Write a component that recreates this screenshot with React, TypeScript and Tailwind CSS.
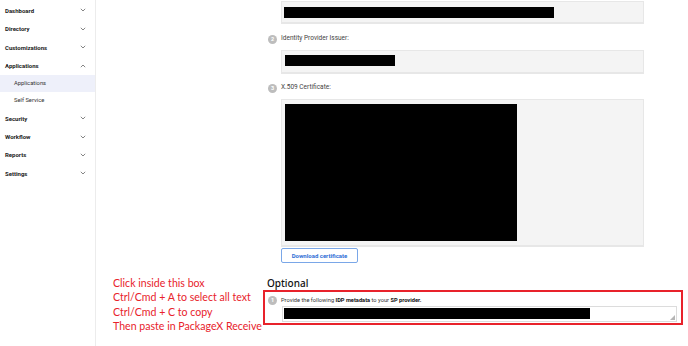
import React from "react";

const Chevron = ({ up }: { up?: boolean }) => (
  <svg width="6" height="4" viewBox="0 0 6 4" className="text-[#777]">
    <path d={up ? "M0.8 3.2 L3 1 L5.2 3.2" : "M0.8 0.8 L3 3 L5.2 0.8"} fill="none" stroke="currentColor" strokeWidth="0.9" />
  </svg>
);

const NavItem = ({ label, up, tall }: { label: string; up?: boolean; tall?: boolean }) => (
  <div className={`${tall ? "h-[18.5px]" : "h-[18.4px]"} flex items-center justify-between pl-[5px] pr-[9px]`}>
    <span className="text-[6px] font-bold text-[#222]">{label}</span>
    <Chevron up={up} />
  </div>
);

const Step = ({ n }: { n: number }) => (
  <span className="w-[9px] h-[9px] rounded-full bg-[#bdbdbd] text-white text-[5.5px] font-bold flex items-center justify-center shrink-0">
    {n}
  </span>
);

export default function App() {
  return (
    <div className="relative w-[688px] h-[346px] bg-white overflow-hidden flex" style={{ fontFamily: "Roboto, 'Noto Sans', sans-serif" }}>
      <aside className="w-[96px] h-full border-r border-[#ececec] pt-[1px] shrink-0">
        <NavItem label="Dashboard" tall />
        <NavItem label="Directory" tall />
        <NavItem label="Customizations" tall />
        <NavItem label="Applications" up tall />
        <div className="h-[17px] bg-[#eef0fa] flex items-center pl-[14px]">
          <span className="text-[5.8px] text-[#333]">Applications</span>
        </div>
        <div className="h-[17px] flex items-center pl-[14px]">
          <span className="text-[5.8px] text-[#333]">Self Service</span>
        </div>
        <NavItem label="Security" />
        <NavItem label="Workflow" />
        <NavItem label="Reports" />
        <NavItem label="Settings" />
      </aside>

      <main className="flex-1 pl-[167px]">
        <div className="w-[420px] flex flex-col">
          <div className="ml-[18px] mt-[1px] w-[363px] h-[23px] bg-[#f4f4f4] border border-[#e7e7e7] border-b-2 pl-[2px] pt-[5px]">
            <div className="w-[270px] h-[11px] bg-black" />
          </div>

          <div className="ml-[5px] mt-[10px] h-[10px] flex items-center gap-[4px]">
            <Step n={2} />
            <span className="text-[6.5px] text-[#444]">Identity Provider Issuer:</span>
          </div>

          <div className="ml-[18px] mt-[6px] w-[363px] h-[24px] bg-[#f4f4f4] border border-[#e7e7e7] border-b-2 pl-[3px] pt-[4px]">
            <div className="w-[110px] h-[11px] bg-black" />
          </div>

          <div className="ml-[5px] mt-[9px] h-[10px] flex items-center gap-[4px]">
            <Step n={3} />
            <span className="text-[6.5px] text-[#444]">X.509 Certificate:</span>
          </div>

          <div className="ml-[18px] mt-[6px] w-[363px] h-[148px] bg-[#f4f4f4] border border-[#e7e7e7] border-b-2 pl-[3px] pt-[4px]">
            <div className="w-[232px] h-[137px] bg-black" />
          </div>

          <div className="ml-[18px] mt-[1px] w-[77px] h-[15px] border border-[#7aa7e8] rounded-[2px] flex items-center justify-center">
            <span className="text-[6px] font-bold text-[#2f6fd6]">Download certificate</span>
          </div>

          <div className="ml-[4px] mt-[14px] h-[12px] flex items-center">
            <span className="text-[10px] font-medium text-[#111]" style={{ fontFamily: "'Noto Sans', sans-serif" }}>Optional</span>
          </div>

          <div className="mt-[1px] w-[420px] h-[35px] border-2 border-[#e8222b] pl-[3px] pt-[3px]">
            <div className="flex items-center gap-[4px] h-[10px]">
              <Step n={1} />
              <span className="text-[5.7px] text-[#333]">
                Provide the following <b className="font-bold text-[#111]">IDP metadata</b> to your <b className="font-bold text-[#111]">SP provider.</b>
              </span>
            </div>
            <div className="relative ml-[14px] mt-[1px] w-[395px] h-[16px] border border-[#dcdcdc] bg-white pl-[1px] pt-[1px]">
              <div className="w-[306px] h-[11px] bg-black" />
              <svg className="absolute right-[1px] bottom-[1px]" width="5" height="5" viewBox="0 0 5 5">
                <path d="M5 0 L5 5 L0 5 Z" fill="#b5b5b5" />
              </svg>
            </div>
          </div>
        </div>
      </main>

      <div className="absolute left-[113px] top-[276px] text-[#e8222b] text-[10.6px] leading-[14.3px]" style={{ fontFamily: "Lato, 'Open Sans', sans-serif" }}>
        <div>Click inside this box</div>
        <div>Ctrl/Cmd + A to select all text</div>
        <div>Ctrl/Cmd + C to copy</div>
        <div>Then paste in PackageX Receive</div>
      </div>
    </div>
  );
}
